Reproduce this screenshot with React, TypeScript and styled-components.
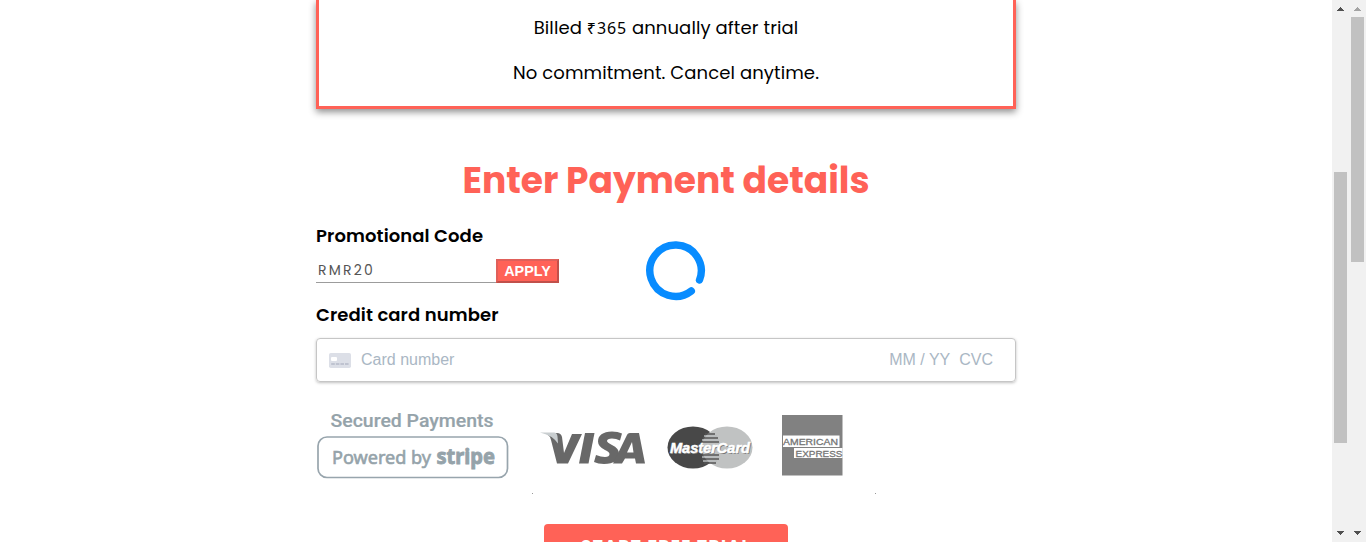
import React from "react";
import styled, { createGlobalStyle } from "styled-components";

const coral = "#ff6257";

const GlobalStyle = createGlobalStyle`
  * { box-sizing: border-box; }
  html, body { margin: 0; padding: 0; overflow: hidden; background: #fff; }
  body { font-family: Poppins, Inter, "Liberation Sans", sans-serif; color: #000; }
`;

const Shell = styled.div`
  display: flex;
  width: 1366px;
  height: 542px;
  overflow: hidden;
`;

const Viewport = styled.main`
  position: relative;
  flex: 1;
  display: flex;
  justify-content: center;
  overflow: hidden;
`;

const Column = styled.div`
  width: 700px;
  flex: none;
`;

const PlanCard = styled.section`
  height: 109px;
  padding-top: 5px;
  border: 3px solid ${coral};
  border-top: 0;
  box-shadow: 0 3px 7px rgba(0, 0, 0, 0.45);
  text-align: center;
`;

const PlanLine = styled.p`
  height: 45px;
  margin: 0;
  font-size: 18px;
  line-height: 46px;
  letter-spacing: 0.1px;
  white-space: nowrap;
`;

const Price = styled.span`
  font-family: "Noto Sans", sans-serif;
  font-size: 16px;
  letter-spacing: 0.9px;
`;

const Title = styled.h1`
  height: 54px;
  margin: 45px 0 14px;
  font-size: 36px;
  font-weight: 700;
  line-height: 54px;
  color: ${coral};
  text-align: center;
  white-space: nowrap;
`;

const Label = styled.h2`
  height: 26px;
  margin: 0;
  font-size: 18px;
  font-weight: 600;
  line-height: 27px;
  letter-spacing: 0.1px;
  white-space: nowrap;
`;

const PromoRow = styled.div`
  display: flex;
  align-items: stretch;
  height: 24px;
  margin: 11px 0 18px;
`;

const PromoInput = styled.input`
  width: 180px;
  padding: 0 2px;
  border: 0;
  border-bottom: 1px solid #9c9c9c;
  outline: 0;
  border-radius: 0;
  background: transparent;
  color: #555;
  font-family: Poppins, Inter, sans-serif;
  font-size: 14px;
  letter-spacing: 2.2px;
`;

const ApplyButton = styled.button`
  width: 63px;
  padding: 0;
  border: 2px solid;
  border-color: #e0605a #c1504a #c1504a #e0605a;
  background: ${coral};
  color: #fff;
  font-family: "Liberation Sans", Arial, sans-serif;
  font-size: 14.4px;
  font-weight: 700;
  line-height: 20px;
`;

const CardField = styled.div`
  display: flex;
  align-items: center;
  height: 44px;
  margin-top: 11px;
  padding: 0 22px 0 12px;
  border: 1px solid #c6c6c6;
  border-radius: 4px;
  box-shadow: 0 1px 3px rgba(0, 0, 0, 0.25);
  color: #aab7c4;
  font-family: "Liberation Sans", Arial, sans-serif;
  font-size: 16px;
  white-space: pre;
`;

const CardNumber = styled.span`
  flex: 1;
  margin-left: 10px;
`;

const Expiry = styled.span`
  margin-right: 9px;
`;

const Logos = styled.div`
  display: flex;
  height: 112px;
  margin-bottom: 30px;
  svg { display: block; }
`;

const StartButton = styled.button`
  display: block;
  width: 244px;
  height: 44px;
  margin: 0 auto;
  padding: 0;
  border: 0;
  border-radius: 4px;
  background: ${coral};
  color: #fff;
  font-family: Poppins, Inter, sans-serif;
  font-size: 17px;
  font-weight: 700;
  line-height: 44px;
  letter-spacing: 1.45px;
`;

const Loader = styled.div`
  position: absolute;
  left: 645px;
  top: 240px;
  svg { display: block; }
`;

const Track = styled.div`
  display: flex;
  flex-direction: column;
  align-items: center;
  width: 17px;
  height: 542px;
  flex: none;
  background: #f1f1f1;
`;

const Thumb = styled.div<{ $offset: number; $size: number }>`
  width: 13px;
  height: ${(p) => p.$size}px;
  margin-top: ${(p) => p.$offset}px;
  margin-bottom: auto;
  background: #c1c1c1;
`;

const ArrowIcon = styled.svg`
  flex: none;
`;

const Arrow = ({ down, color = "#505050" }: { down?: boolean; color?: string }) => (
  <ArrowIcon width="17" height="17" fill={color} shapeRendering="crispEdges">
    {down ? <path d="M5 6h7v1h-1v1h-1v1h-1v1H8V9H7V8H6V7H5z" /> : <path d="M8 7h1v1h1v1h1v1h1v1H5v-1h1V9h1V8h1z" />}
  </ArrowIcon>
);

const ScrollBar = ({ offset, size, atTop }: { offset: number; size: number; atTop?: boolean }) => (
  <Track>
    <Arrow color={atTop ? "#a3a3a3" : undefined} />
    <Thumb $offset={offset} $size={size} />
    <Arrow down />
  </Track>
);

const CardIcon = () => (
  <svg width="22" height="15" viewBox="0 0 22 15">
    <rect width="22" height="15" rx="1.8" fill="#dcdfe7" />
    <rect x="2" y="4" width="6" height="4" rx="1" fill="#fff" />
    <path d="M2.200 11h3.600M6.800 11h3.600M11.400 11h3.600M16 11h3.600" stroke="#b5bbc9" strokeWidth="1.3" />
  </svg>
);

const StripeBadge = () => (
  <svg width="216" height="112" fill="#95a3aa" fontFamily="Roboto, sans-serif">
    <text x="14.5" y="45" fontSize="19" fontWeight="500" stroke="#95a3aa" strokeWidth=".2" textLength="163" lengthAdjust="spacingAndGlyphs">Secured Payments</text>
    <rect x="2" y="55" width="189.5" height="40.5" rx="9" fill="none" stroke="#98a5ad" strokeWidth="1.7" />
    <text x="16" y="81.5" fontFamily="'Noto Sans', sans-serif" fontSize="18" stroke="#95a3aa" strokeWidth=".6" textLength="99" lengthAdjust="spacingAndGlyphs">Powered by</text>
    <text x="120.5" y="82" fontFamily="'Noto Sans', sans-serif" fontSize="22" fontWeight="700" stroke="#95a3aa" strokeWidth=".9" textLength="58.5" lengthAdjust="spacingAndGlyphs">stripe</text>
  </svg>
);

const CardBrands = () => (
  <svg width="350" height="112">
    <g fill="#686868">
      <path d="M16 51h9q4 0 5 4l2 16 8-19h10L36 81.500H25L19 58q-1-4-4-6z" />
      <path d="M53 51h9.500l-6 30.500H47z" />
      <path d="M90 51.500l-2 7q-4-2-8-2-5 0-5 2.500 0 1.500 5 4 7 3.500 7 8.500 0 10-15 10.500-6 0-10-2l2-7q5 2 9 2 4.500 0 4.500-3 0-2-4.500-4-7-3.500-7-8.500 0-9.500 14-10 6 0 10 2z" />
      <path fillRule="evenodd" d="M98 51h9l6 30.500h-9l-1-5H93l-3 5H81l13.500-27.500q1-3 3.500-3zm2 9-5 10.500h6.500z" />
    </g>
    <path d="M8 50.500h14q3 0 3.500 4l.5 7Q20 53 8 50.500z" fill="#c9ced0" />
    <ellipse cx="161" cy="65.500" rx="25.500" ry="21" fill="#484848" />
    <ellipse cx="195" cy="65.500" rx="25.500" ry="21" fill="#c0c2c2" />
    <path d="M173 52h10M171 56h15M170 60h17M170 73h17M170 77h17M172 81h12" stroke="#555" strokeWidth="1.5" />
    <path d="M172 54h13M170 58h17M170 75h17M171 79h14" stroke="#b7bbbc" strokeWidth="1.7" />
    <g fontFamily="'Liberation Sans', sans-serif" fontSize="15.5" fontStyle="italic" fontWeight="700">
      <text x="138.8" y="71.800" fill="#777" textLength="80" lengthAdjust="spacingAndGlyphs">MasterCard</text>
      <text x="138" y="71" fill="#fff" stroke="#fff" strokeWidth=".5" textLength="80" lengthAdjust="spacingAndGlyphs">MasterCard</text>
    </g>
    <rect x="250" y="33" width="60.5" height="60.5" fill="#818181" />
    <path d="M251 53.500h56.500V65H251zM262 66h48.500v10H262z" fill="#fff" />
    <g fill="#757575" stroke="#757575" strokeWidth=".3" fontFamily="'Liberation Sans', sans-serif" fontSize="9.8">
      <text x="251" y="62.500" textLength="55" lengthAdjust="spacingAndGlyphs">AMERICAN</text>
      <text x="263.5" y="74.500" textLength="47" lengthAdjust="spacingAndGlyphs">EXPRESS</text>
    </g>
    <path d="M0 111h1v1H0zM343 111h1v1h-1z" fill="#999" />
  </svg>
);

const Spinner = () => (
  <svg width="61" height="61" viewBox="0 0 61 61">
    <path d="M54.500 40A25.700 25.700 0 1 0 46.300 51" fill="none" stroke="#088cff" strokeWidth="7.4" strokeLinecap="round" />
  </svg>
);

export default function App() {
  return (
    <Shell>
      <GlobalStyle />
      <Viewport>
        <Column>
          <PlanCard>
            <PlanLine>Billed <Price>₹365</Price> annually after trial</PlanLine>
            <PlanLine>No commitment. Cancel anytime.</PlanLine>
          </PlanCard>
          <Title>Enter Payment details</Title>
          <Label>Promotional Code</Label>
          <PromoRow>
            <PromoInput defaultValue="RMR20" aria-label="Promotional Code" />
            <ApplyButton>APPLY</ApplyButton>
          </PromoRow>
          <Label>Credit card number</Label>
          <CardField>
            <CardIcon />
            <CardNumber>Card number</CardNumber>
            <Expiry>MM / YY</Expiry>
            <span>CVC</span>
          </CardField>
          <Logos>
            <StripeBadge />
            <CardBrands />
          </Logos>
          <StartButton>START FREE TRIAL</StartButton>
        </Column>
        <Loader>
          <Spinner />
        </Loader>
      </Viewport>
      <ScrollBar offset={155} size={271} />
      <ScrollBar offset={0} size={245} atTop />
    </Shell>
  );
}
